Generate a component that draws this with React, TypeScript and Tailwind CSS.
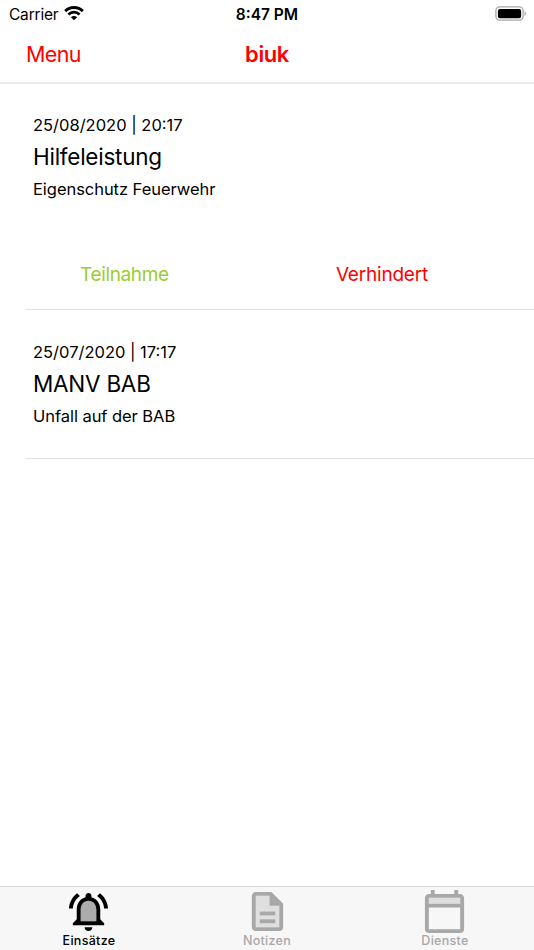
import type { ReactNode } from "react";

function Wifi() {
  return (
    <svg width="20" height="15" viewBox="0 0 20 15" className="mb-px ml-[6px] shrink-0" fill="none">
      <path d="M1.2 5.1a12.6 12.6 0 0 1 17.6 0" stroke="#000" strokeWidth="2.9" />
      <path d="M4.4 8.5a7.9 7.9 0 0 1 11.2 0" stroke="#000" strokeWidth="2.7" />
      <path d="M10 14.3l-3.1-3a4.3 4.3 0 0 1 6.2 0z" fill="#000" />
    </svg>
  );
}

function Battery() {
  return (
    <svg width="32" height="15" viewBox="0 0 32 15" className="mb-px" fill="none">
      <rect x="0.9" y="0.9" width="27.2" height="13.2" rx="3.8" stroke="#a6a6a6" strokeWidth="1.3" />
      <rect x="2.9" y="2.9" width="23.2" height="9.4" rx="2" fill="#000" />
      <path d="M29.6 5.2c1.8.6 1.8 4 0 4.6z" fill="#a6a6a6" />
    </svg>
  );
}

function Tab({ label, active, children }: { label: string; active?: boolean; children: ReactNode }) {
  return (
    <div className={`flex flex-1 flex-col items-center ${active ? "text-black" : "text-[#a8a8a8]"}`}>
      {children}
      <span className="-mt-[2px] text-[12.5px] leading-[16px] font-medium tracking-[0.3px]">{label}</span>
    </div>
  );
}

function Entry({ date, title, text }: { date: string; title: string; text: string }) {
  return (
    <div className="flex flex-col items-start pl-[7px] text-black">
      <span className="h-8 text-[16.5px] leading-8">{date}</span>
      <span className="h-8 text-[22.5px] leading-8 tracking-[-0.25px]">{title}</span>
      <span className="h-8 text-[16.5px] leading-8 tracking-[-0.05px]">{text}</span>
    </div>
  );
}

export default function App() {
  return (
    <div className="flex h-[950px] w-[534px] flex-col overflow-hidden bg-white font-['Inter','Liberation_Sans',sans-serif]">
      <header className="h-[84px] shrink-0 border-b-2 border-[#ebebeb]">
        <div className="grid h-[27px] grid-cols-3 items-center text-black">
          <div className="flex items-center pl-[9px] text-[15.5px] leading-[27px]">
            <span className="pt-px tracking-[-0.2px]">Carrier</span>
            <Wifi />
          </div>
          <span className="pt-px text-center text-[15.5px] font-semibold">8:47 PM</span>
          <div className="flex justify-end pr-[7px]">
            <Battery />
          </div>
        </div>
        <div className="grid h-[54px] grid-cols-3 text-[#ff0000]">
          <span className="pl-[26px] text-[21.5px] leading-[54px] tracking-[-0.65px]">Menu</span>
          <span className="text-center text-[22px] leading-[54px] font-semibold tracking-[-0.4px]">biuk</span>
        </div>
      </header>

      <main className="flex-1 pl-[26px]">
        <section className="h-[226px] border-b border-[#e0e0e0] pt-[25px]">
          <Entry date="25/08/2020 | 20:17" title="Hilfeleistung" text="Eigenschutz Feuerwehr" />
          <div className="mt-[54px] flex h-8 text-[19px] leading-8">
            <span className="pl-[54px] tracking-[-0.35px] text-[#9acd32]">Teilnahme</span>
            <span className="ml-auto pr-[106px] tracking-[-0.2px] text-[#ff0000]">Verhindert</span>
          </div>
        </section>
        <section className="h-[149px] border-b border-[#e0e0e0] pt-[26px]">
          <Entry date="25/07/2020 | 17:17" title="MANV BAB" text="Unfall auf der BAB" />
        </section>
      </main>

      <nav className="flex h-16 shrink-0 border-t border-[#d6d6d6] bg-[#f7f7f7]">
        <Tab label="Einsätze" active>
          <svg width="47" height="47" viewBox="0 0 24 24" fill="currentColor" className="mt-px mr-px">
            <path opacity=".3" d="M12 6.5c-2.49 0-4 2.02-4 4.5v6h8v-6c0-2.48-1.51-4.5-4-4.5z" />
            <path d="M12 22c1.1 0 2-.9 2-2h-4c0 1.1.9 2 2 2zm6-6v-5c0-3.07-1.63-5.64-4.5-6.32V4c0-.83-.67-1.5-1.5-1.5s-1.5.67-1.5 1.5v.68C7.64 5.36 6 7.92 6 11v5l-2 2v1h16v-1l-2-2zm-2 1H8v-6c0-2.48 1.51-4.5 4-4.5s4 2.02 4 4.5v6zM7.58 4.08L6.15 2.65C3.75 4.48 2.17 7.3 2.03 10.5h2c.15-2.65 1.51-4.97 3.55-6.42zm12.39 6.42h2c-.15-3.2-1.73-6.02-4.12-7.85l-1.42 1.43c2.02 1.45 3.39 3.77 3.54 6.42z" />
          </svg>
        </Tab>
        <Tab label="Notizen">
          <svg width="47" height="47" viewBox="0 0 24 24" fill="currentColor" className="mt-px">
            <path opacity=".3" d="M13 4H6v16h12V9h-5V4zm3 14H8v-2h8v2zm0-6v2H8v-2h8z" />
            <path d="M8 16h8v2H8zm0-4h8v2H8zm6-10H6c-1.1 0-2 .9-2 2v16c0 1.1.89 2 1.99 2H18c1.1 0 2-.9 2-2V8l-6-6zm4 18H6V4h7v5h5v11z" />
          </svg>
        </Tab>
        <Tab label="Dienste">
          <svg width="47" height="47" viewBox="0 0 24 24" fill="currentColor" className="mt-px mr-px">
            <path opacity=".3" d="M4 5h16v3H4z" />
            <path d="M20 3h-1V1h-2v2H7V1H5v2H4c-1.1 0-2 .9-2 2v16c0 1.1.9 2 2 2h16c1.1 0 2-.9 2-2V5c0-1.1-.9-2-2-2zm0 18H4V10h16v11zm0-13H4V5h16v3z" />
          </svg>
        </Tab>
      </nav>
    </div>
  );
}
